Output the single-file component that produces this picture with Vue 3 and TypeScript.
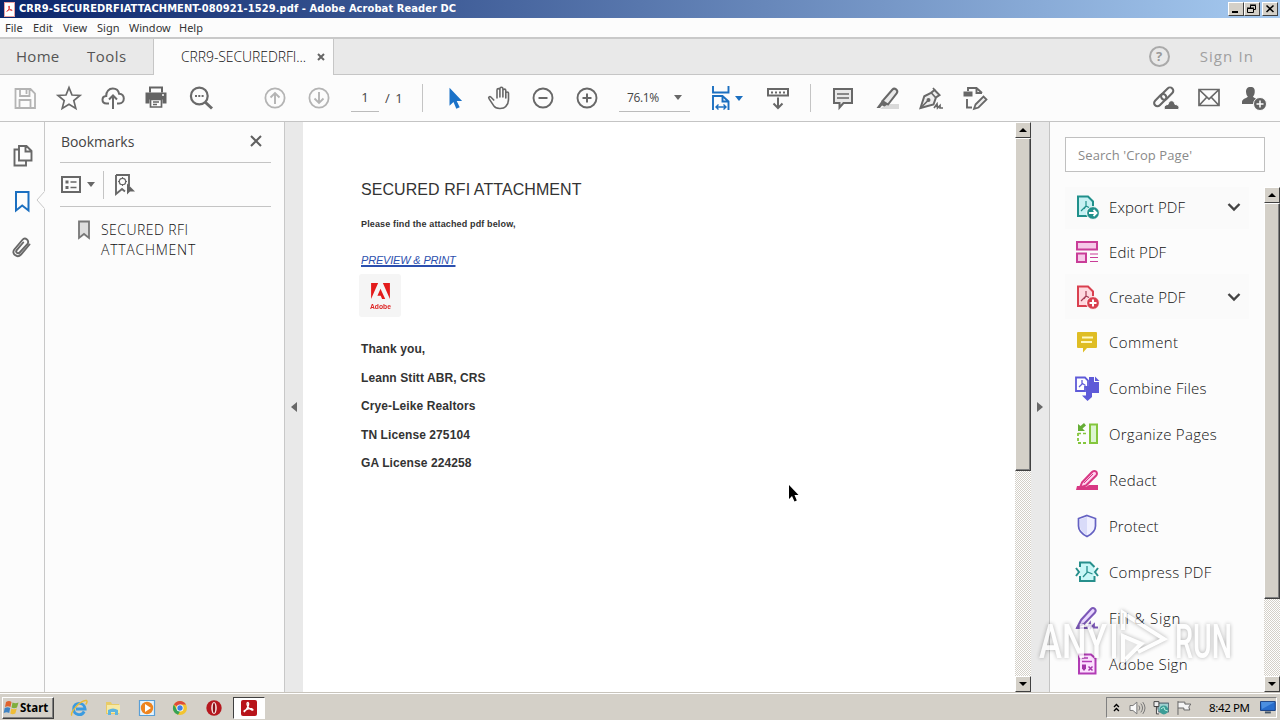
<script setup lang="ts">
interface Tool { label: string; icon: string; chevron?: boolean; tall?: boolean }

const menus = ['File', 'Edit', 'View', 'Sign', 'Window', 'Help']
const tools: Tool[] = [
  { label: 'Export PDF', icon: 'export', chevron: true },
  { label: 'Edit PDF', icon: 'editpdf' },
  { label: 'Create PDF', icon: 'create', chevron: true },
  { label: 'Comment', icon: 'note', tall: true },
  { label: 'Combine Files', icon: 'combine', tall: true },
  { label: 'Organize Pages', icon: 'organize', tall: true },
  { label: 'Redact', icon: 'redact', tall: true },
  { label: 'Protect', icon: 'protect', tall: true },
  { label: 'Compress PDF', icon: 'compress', tall: true },
  { label: 'Fill & Sign', icon: 'fill', tall: true },
  { label: 'Adobe Sign', icon: 'adobesign', tall: true },
]
const signature = ['Thank you,', 'Leann Stitt ABR, CRS', 'Crye-Leike Realtors', 'TN License 275104', 'GA License 224258']
const fileIcons = ['save', 'star', 'cloud', 'print', 'find']
const viewIcons = ['select', 'hand', 'minus', 'plus']
const markIcons = ['comment', 'marker', 'pen', 'stamp']
const shareIcons = ['link', 'mail', 'person']
const quick = ['ie', 'folder', 'media', 'chrome', 'opera']
</script>

<template>
  <div class="screen">
    <svg class="defs" width="0" height="0">
      <symbol id="save" viewBox="0 0 28 28"><path d="M4.500 5h15l4.500 4.500V24H4.500zM9 5v7h9.500V5M8.500 24v-8h11v8M15.500 6v4" fill="none" stroke="#b4b4b4" stroke-width="1.800"/></symbol>
      <symbol id="star" viewBox="0 0 28 28"><path d="M14 3.600l3 7.400 8 .5-6.200 5.100 2 7.800L14 20.200l-6.800 4.200 2-7.800L3 11.500l8-.5z" fill="none" stroke="#6a6a6a" stroke-width="1.700"/></symbol>
      <symbol id="cloud" viewBox="0 0 28 28"><path d="M10 19.500H7.500C5 19.500 3.500 18 3.500 15.800c0-2.300 1.700-3.700 3.700-3.800C7 7.500 10 4.500 13.800 4.500c3.200 0 5.700 2 6.300 5.200 2.900.2 4.700 2.300 4.700 4.800 0 3-2 5-4.700 5H18M14 25V12M10 15.500l4-4 4 4" fill="none" stroke="#6a6a6a" stroke-width="2"/></symbol>
      <symbol id="print" viewBox="0 0 28 28"><g transform="translate(-1 -.5)"><path d="M8 9V4h12v5" fill="none" stroke="#646464" stroke-width="2"/><path d="M3.500 9h21v11h-4v-4h-13v4h-4z" fill="#646464"/><path d="M8.500 16h11v7.500h-11zM11 18.500h6M11 21h4" fill="none" stroke="#646464" stroke-width="1.700"/><path d="M20 11.500h2" stroke="#fff" stroke-width="1.500"/></g></symbol>
      <symbol id="find" viewBox="0 0 28 28"><circle cx="12.300" cy="12" r="8.400" fill="none" stroke="#6a6a6a" stroke-width="2.200"/><path d="M18 18l7 6.500" stroke="#6a6a6a" stroke-width="3"/><path d="M8 12h2m1.300 0h2m1.300 0h2" stroke="#6a6a6a" stroke-width="2"/></symbol>
      <symbol id="up" viewBox="0 0 28 28"><circle cx="14" cy="14" r="9.600" fill="none" stroke="#b4b4b4" stroke-width="1.800"/><path d="M14 20V9M9.500 13.500L14 9l4.500 4.500" fill="none" stroke="#b4b4b4" stroke-width="1.900"/></symbol>
      <symbol id="down" viewBox="0 0 28 28"><circle cx="14" cy="14" r="9.600" fill="none" stroke="#b4b4b4" stroke-width="1.800"/><path d="M14 8v11M9.500 14.500L14 19l4.500-4.500" fill="none" stroke="#b4b4b4" stroke-width="1.900"/></symbol>
      <symbol id="select" viewBox="0 0 28 28"><path d="M8.500 3.700v18l4-3.700 2.800 6.800 3.400-1.500-3-6.300h5.400z" fill="#1b72c8"/></symbol>
      <symbol id="hand" viewBox="0 0 28 28"><path d="M9.200 16.500L5.800 13c-1-.8-2.800.2-1.800 1.600l4.800 7.300c2 3.300 9.700 3.300 12 .5 2-2.200 2.700-4.400 2.700-7V9.200c0-1.700-2.500-1.700-2.700 0V14 6.500c0-1.900-2.900-1.900-2.900 0V13 4.800c0-2-3-2-3 0V13 6c0-1.900-2.900-1.900-2.900 0v8.500" fill="none" stroke="#686868" stroke-width="1.600" stroke-linejoin="round"/></symbol>
      <symbol id="minus" viewBox="0 0 28 28"><circle cx="14" cy="14" r="9.500" fill="none" stroke="#686868" stroke-width="1.900"/><path d="M9.500 14h9" stroke="#686868" stroke-width="2"/></symbol>
      <symbol id="plus" viewBox="0 0 28 28"><circle cx="14" cy="14" r="9.500" fill="none" stroke="#686868" stroke-width="1.900"/><path d="M9.500 14h9M14 9.500v9" stroke="#686868" stroke-width="2"/></symbol>
      <symbol id="fit" viewBox="0 0 28 28"><path d="M6 2v6.500h15.500V2M6 26V12h9.500l6 5.500V26M15.500 12v5.500h6" fill="none" stroke="#1b6fc0" stroke-width="1.900"/><path d="M9 23h10M11.500 20.500L9 23l2.500 2.500M16.500 20.500L19 23l-2.500 2.500" fill="none" stroke="#1b6fc0" stroke-width="1.400"/></symbol>
      <symbol id="toolbar" viewBox="0 0 28 28"><path d="M4 5h20v6.500H4z" fill="none" stroke="#686868" stroke-width="2"/><path d="M7 8.500h2m2 0h2m2 0h2m2 0h2" stroke="#686868" stroke-width="1.800"/><path d="M14 13.500v10M9.500 19.500L14 24l4.500-4.500" fill="none" stroke="#686868" stroke-width="2"/></symbol>
      <symbol id="comment" viewBox="0 0 28 28"><path d="M5 5h18v14h-8.500L10.500 23.500V19H5z" fill="#e9e9e9" stroke="#686868" stroke-width="2"/><path d="M8 10h12M8 14h12" stroke="#686868" stroke-width="1.500"/></symbol>
      <symbol id="marker" viewBox="0 0 28 28"><path d="M13 20h13v5H7z" fill="#d9d9d9"/><path d="M19.500 5.500c2-2.300 6.200.8 4.300 3.700L15 20.500 9.500 17z" fill="#e9e9e9" stroke="#686868" stroke-width="2"/><path d="M9 16.500l5.500 4-3 2L9 21.500 7 24H3.500z" fill="#686868"/></symbol>
      <symbol id="pen" viewBox="0 0 28 28"><path d="M17.500 6l5 5L19 13.500l-2.500 7L3.500 24l3.800-11.700 6.700-3.500z" fill="#eee" stroke="#686868" stroke-width="2"/><path d="M3.500 24l7.500-7.500M16 4l2 2.500M14 8.500l4.500 5" stroke="#686868" stroke-width="1.700"/><circle cx="11.500" cy="16" r="2" fill="#686868"/><path d="M17 24l3-4 .5 4 2.500-2.500v2.500h3" fill="none" stroke="#686868" stroke-width="1.700"/></symbol>
      <symbol id="stamp" viewBox="0 0 28 28"><path d="M7 7V4h8.500l5.500 5M6 15v8.500h5M15.500 4v5H21" fill="none" stroke="#686868" stroke-width="1.900"/><path d="M2.500 7.500h9v5h-9z" fill="#686868"/><path d="M14.500 20.500l8-8 3 3-8 8-4.500 1.300z" fill="#eee" stroke="#686868" stroke-width="1.800"/></symbol>
      <symbol id="link" viewBox="0 0 28 28"><g fill="none" stroke="#686868" stroke-width="2.100"><rect x="9" y="6" width="14.500" height="6.600" rx="3.300" transform="rotate(-45 16.500 9.500)"/><rect x="2.200" y="13" width="14.500" height="6.600" rx="3.300" transform="rotate(-45 9.200 16.500)"/></g><path d="M14 25.500c-2-2 0-5 3-5 1-5 6-5 7 0 4 0 5 4 3 5z" fill="#646464" stroke="#fcfcfc"/></symbol>
      <symbol id="mail" viewBox="0 0 28 28"><path d="M4 5.500h20v16H4zM4.500 6l9.500 9 9.500-9M4.500 21l7.500-8M23.500 21L16 13" fill="none" stroke="#686868" stroke-width="1.700"/></symbol>
      <symbol id="person" viewBox="0 0 28 28"><path d="M11.500 3c3.500 0 4.700 2 4.200 5.500-.2 2-.8 3-1.700 4 0 1.500 5.500 2 5.500 5.500v2H3v-2c0-3.500 5.800-4 5.800-5.500-1-1-1.500-2-1.700-4C6.700 5 8.300 3 11.500 3z" fill="#646464"/><circle cx="21" cy="20" r="6.500" fill="#646464" stroke="#fcfcfc"/><path d="M17.500 20h7M21 16.500v7" stroke="#fff" stroke-width="1.500"/></symbol>
      <symbol id="pages" viewBox="0 0 28 28"><path d="M11 5h7.500l5 5v9.500H11zM17.500 5v5.500h6M11 8.500H6.500v16h11.500V20" fill="none" stroke="#686868" stroke-width="1.900"/></symbol>
      <symbol id="mark" viewBox="0 0 28 28"><path d="M8 5h12.500v18.500L14.200 18.500 8 23.500z" fill="none" stroke="#1b6fc0" stroke-width="2"/></symbol>
      <symbol id="clip" viewBox="0 0 28 28"><path d="M21.500 11.500L13 21.500c-3.700 4-10-.7-6.700-5l8-9.500c2.800-3.300 8 .6 5 4.200l-7.600 8.300c-1.900 2-4.600-.3-3-2.400l6.500-7.600" fill="none" stroke="#686868" stroke-width="1.900" stroke-linecap="round"/></symbol>

      <symbol id="export" viewBox="0 0 28 28"><path d="M5 3.500h10l5 5V23H5z" fill="#c6f1f3" stroke="#20908b" stroke-width="2"/><path d="M8 18l5-5 4 2M13 8v5l-2 3" fill="none" stroke="#20908b" stroke-width="1.200"/><circle cx="20" cy="20" r="6.400" fill="#20908b" stroke="#fff"/><path d="M16 20h7M20.500 17l3 3-3 3" fill="none" stroke="#fff" stroke-width="1.800"/></symbol>
      <symbol id="editpdf" viewBox="0 0 28 28"><path d="M4 4h20v7.500H4zM4 15.500h9v8.500H4z" fill="#f6c9e8" stroke="#c93d98" stroke-width="2"/><path d="M17 16h8M17 19.500h8M17 23.500h8" stroke="#c93d98" stroke-width="1.200"/></symbol>
      <symbol id="create" viewBox="0 0 28 28"><path d="M5 3.500h10l5 5V23H5z" fill="#ffd9df" stroke="#d9404f" stroke-width="2"/><path d="M8 18l5-5 4 2M13 8v5l-2 3" fill="none" stroke="#a33d55" stroke-width="1.200"/><circle cx="20" cy="20" r="6.400" fill="#d9404f" stroke="#fff"/><path d="M16.500 20h7M20 16.500v7" stroke="#fff" stroke-width="2"/></symbol>
      <symbol id="note" viewBox="0 0 28 28"><path d="M5 4h18q1 0 1 1v14q0 1-1 1h-9L10 24.500V20H5q-1 0-1-1V5q0-1 1-1z" fill="#dfbd24"/><path d="M9 9.500h11M8 14h11" stroke="#fff8c0" stroke-width="1.800"/></symbol>
      <symbol id="combine" viewBox="0 0 28 28"><path d="M16 3h5v5h5v11h-7v4l-4.500 4L9 21.500h4v-9L16 12z" fill="#5e5ad8"/><path d="M22 2.500l4.500 4.500H22z" fill="#5e5ad8"/><path d="M3 3.500h9l3 3V13h-3v4H3z" fill="#fff" stroke="#5e5ad8" stroke-width="1.800"/><path d="M6 13l3.500-3.500 3 2M9 6v4" fill="none" stroke="#5e5ad8" stroke-width="1.300"/></symbol>
      <symbol id="organize" viewBox="0 0 28 28"><path d="M17 4.500h7v18.500h-7z" fill="#dcf5d0" stroke="#84c63c" stroke-width="2"/><path d="M5 13v10h9" fill="none" stroke="#84c63c" stroke-width="1.800" stroke-dasharray="3 2"/><path d="M5 13.500h9" stroke="#84c63c" stroke-width="1.600" stroke-dasharray="3 2"/><path d="M5 4v7h7L9.500 8.500 13 5.500 11 3 7.500 6z" fill="#65ad36"/></symbol>
      <symbol id="redact" viewBox="0 0 28 28"><path d="M4 20h6l3 1 3-2h9v5H3z" fill="#d83884"/><path d="M9 16.500L19 6c2.500-3 6.700.7 4.200 3.500L13 19.500l-6 2z" fill="#ffd4f0" stroke="#d83884" stroke-width="2"/><path d="M11 17L20 8" stroke="#d83884"/></symbol>
      <symbol id="protect" viewBox="0 0 28 28"><path d="M14 3.500l8.500 3V14c0 5-3.500 8-8.500 10.500C9 22 5.500 19 5.500 14V6.500z" fill="#f0f0ff" stroke="#6461c2" stroke-width="1.700"/><path d="M14 5v18c-4-2-7-5-7-9V7.500z" fill="#d9dbf9"/></symbol>
      <symbol id="compress" viewBox="0 0 28 28"><path d="M7 9V4.500h10L21.500 9v14H7v-5" fill="#c9f7f7"/><path d="M7 9V4.500h10L21.500 9M7 18v5h14.500v-5" fill="none" stroke="#278f8c" stroke-width="2"/><path d="M3 10l3 4-3 4M25 10l-3 4 3 4" fill="none" stroke="#278f8c" stroke-width="2"/><path d="M10 19l4.500-5 5 2M14 8v6" fill="none" stroke="#278f8c" stroke-width="1.300"/></symbol>
      <symbol id="fill" viewBox="0 0 28 28"><path d="M8 16L18 5c2.500-2.500 6 .8 4 3.500L11 20l-6.500 3z" fill="#ead9ff" stroke="#7c58b8" stroke-width="2"/><path d="M3 24h11l3-5 .5 5 3.500-3.500v3h4" fill="none" stroke="#7c58b8" stroke-width="1.800"/></symbol>
      <symbol id="adobesign" viewBox="0 0 28 28"><path d="M6 4.500h12l4.500 4V23.500H6z" fill="#fce1ff" stroke="#b23cb5" stroke-width="2"/><path d="M9 8h6M9 11.500h10" stroke="#b23cb5" stroke-width="1.300"/><path d="M9 14.500h4v4l-2 2.500-2-2.500z" fill="#a336a8"/><path d="M15.500 16.500l4 4M19.500 16.500l-4 4" stroke="#a336a8" stroke-width="1.500"/></symbol>

      <symbol id="ie" viewBox="0 0 18 18"><path d="M14.200 12.500c-3 5.500-11 3-10.500-3 .2-6.800 10.700-7 11.400.5H6" fill="none" stroke="#3b9be0" stroke-width="2.800"/><path d="M2 16.500c-3-2 8.500-16 14.500-15 1 1 .2 2.800-.8 4" fill="none" stroke="#e9bb35" stroke-width="1.400"/></symbol>
      <symbol id="folder" viewBox="0 0 18 18"><path d="M2 3h5l1 2h7v10H2z" fill="#e8cb67"/><path d="M3 6h13v8H3z" fill="#f6e9a4"/><path d="M4 16v-5q5-3 10 0v5h-3v-3H7v3z" fill="#5eb5df"/></symbol>
      <symbol id="media" viewBox="0 0 18 18"><path d="M1.500 1.500h15v15h-15z" fill="#e3f3ff" stroke="#5a9fd6" stroke-width="1.200"/><circle cx="9" cy="9" r="6.200" fill="#ee841f"/><path d="M7 5l6 4-6 4z" fill="#fff"/></symbol>
      <symbol id="chrome" viewBox="0 0 18 18"><circle cx="9" cy="9" r="7" fill="#f2c431"/><path d="M9 9L2.900 5.500A7 7 0 0 1 15 5.500H9z" fill="#dd4a3c"/><path d="M2.900 5.500L6 11l3 1.500-2 3.300A7 7 0 0 1 2.900 5.500z" fill="#35a257"/><circle cx="9" cy="9" r="3.500" fill="#fff"/><circle cx="9" cy="9" r="2.700" fill="#3e80e4"/></symbol>
      <symbol id="opera" viewBox="0 0 18 18"><circle cx="9" cy="9" r="7.700" fill="#b6181f"/><ellipse cx="9" cy="9" rx="2.800" ry="6" fill="#f7e3e1"/><ellipse cx="9" cy="9" rx="1.200" ry="5" fill="#8a1018"/></symbol>
      <symbol id="acro" viewBox="0 0 18 18"><path d="M4 14c-2-1 5-4.500 9-3.500 4 2-2 3-5-3C6.800 5 7 2.500 8.500 3c2 1-1 8.500-4.500 11z" fill="none" stroke="currentColor" stroke-width="1.600"/></symbol>
    </svg>

    <header class="titlebar">
      <span class="appicon"><svg width="11" height="12"><use href="#acro"/></svg></span>
      <span class="title">CRR9-SECUREDRFIATTACHMENT-080921-1529.pdf - Adobe Acrobat Reader DC</span>
      <span class="winbtns">
        <i class="wb"><svg width="14" height="12" viewBox="0 0 14 12"><path d="M3 9h6" stroke="#000" stroke-width="2"/></svg></i>
        <i class="wb"><svg width="14" height="12" viewBox="0 0 14 12"><path d="M5.500 5V2.500h5v4H8.500M5 2h6M2.500 5.500h6v4h-6zM2 5h7" fill="none" stroke="#000"/></svg></i>
        <i class="wb close"><svg width="14" height="12" viewBox="0 0 14 12"><path d="M3.500 2.500l7 6.500M10.500 2.500l-7 6.500" stroke="#000" stroke-width="1.600"/></svg></i>
      </span>
    </header>
    <nav class="menubar"><span v-for="m in menus" :key="m" :class="'m-' + m.toLowerCase()">{{ m }}</span></nav>

    <div class="tabs">
      <div class="lefttabs"><span class="home">Home</span><span class="toolstab">Tools</span></div>
      <div class="active"><span class="doc">CRR9-SECUREDRFI...</span><svg width="8" height="8" viewBox="0 0 8 8"><path d="M1 1l6 6M7 1L1 7" stroke="#666" stroke-width="2"/></svg></div>
      <div class="righttabs"><span class="help">?</span><span class="signin">Sign In</span></div>
    </div>

    <div class="toolbar">
      <svg v-for="i in fileIcons" :key="i" class="ti"><use :href="'#' + i"/></svg>
      <i class="gap"></i>
      <svg class="ti"><use href="#up"/></svg><svg class="ti"><use href="#down"/></svg>
      <span class="pageno">1</span><span class="pagecount">/ 1</span><i class="vdiv"></i>
      <i class="gap10"></i>
      <svg v-for="i in viewIcons" :key="i" class="ti"><use :href="'#' + i"/></svg>
      <span class="zoom"><span>76.1%</span><i class="caret"></i></span>
      <span class="fitbox"><svg class="ti"><use href="#fit"/></svg><i class="caret blue"></i></span>
      <svg class="ti"><use href="#toolbar"/></svg>
      <i class="vdiv d2"></i>
      <svg v-for="i in markIcons" :key="i" class="ti"><use :href="'#' + i"/></svg>
      <i class="spring"></i>
      <svg v-for="i in shareIcons" :key="i" class="ti"><use :href="'#' + i"/></svg>
    </div>

    <main class="main">
      <aside class="rail">
        <svg class="ti"><use href="#pages"/></svg><svg class="ti"><use href="#mark"/></svg><svg class="ti"><use href="#clip"/></svg>
        <svg class="notch" width="9" height="18" viewBox="0 0 9 18"><path d="M8 0v1L1 9l7 8v1h1V0z" fill="#fcfcfc"/><path d="M8.500 0.500L1 9l7.500 8.500" fill="none" stroke="#c8c8c8"/></svg>
      </aside>
      <section class="bookmarks">
        <div class="bhead"><span>Bookmarks</span><svg width="14" height="14" viewBox="0 0 14 14"><path d="M2 2l10 10M12 2L2 12" stroke="#606060" stroke-width="2"/></svg></div>
        <div class="btools">
          <svg width="20" height="17" viewBox="0 0 20 17"><path d="M1 1h18v15H1z" fill="none" stroke="#686868" stroke-width="2"/><path d="M4.500 4.500h3v3h-3zM4.500 10h3v3h-3z" fill="#686868"/><path d="M9.500 6h6M9.500 11.500h6" stroke="#686868" stroke-width="1.700"/></svg>
          <i class="caret"></i><i class="bdiv"></i>
          <svg width="22" height="24" viewBox="0 0 22 24"><path d="M2 2h13v11M2 2v19l6-5 3 2.500" fill="none" stroke="#686868" stroke-width="1.900"/><circle cx="8.500" cy="8.500" r="3.200" fill="none" stroke="#686868" stroke-width="1.300"/><path d="M8.500 4v2M8.500 11v2M4 8.500h2M11 8.500h2" stroke="#686868"/><path d="M13 10.500l8 8h-5l-3 3z" fill="#646464"/></svg>
        </div>
        <div class="bitem"><svg width="14" height="20" viewBox="0 0 14 20"><path d="M2 1.500h10V18L7 14l-5 4z" fill="#dedede" stroke="#777" stroke-width="1.800"/></svg><span>SECURED RFI<br><em>ATTACHMENT</em></span></div>
      </section>
      <div class="collapse"><i class="tri left"></i></div>
      <article class="page">
        <h1>SECURED RFI ATTACHMENT</h1>
        <p class="sub">Please find the attached pdf below,</p>
        <a class="preview">PREVIEW &amp; PRINT</a>
        <div class="adobe"><svg width="19" height="16" viewBox="0 0 20 17"><path d="M0 0h7.500L0 17zM12.500 0H20v17zM10 6l5 11h-3.300l-1.500-3.500H6.700z" fill="#e31b1b"/></svg><span>Adobe</span></div>
        <div class="sig"><p v-for="s in signature" :key="s">{{ s }}</p></div>
      </article>
      <div class="sb sbmain"><i class="sbtn"><b class="au"></b></i><i class="thumb"></i><i class="sbtn last"><b class="ad"></b></i></div>
      <div class="collapse rightc"><i class="tri right"></i></div>
      <aside class="panel">
        <div class="search">Search 'Crop Page'</div>
        <div class="panelbody">
          <ul>
            <li v-for="t in tools" :key="t.label" :class="{ tall: t.tall, shade: t.chevron }">
              <svg class="ticon"><use :href="'#' + t.icon"/></svg><span :class="'t-' + t.icon">{{ t.label }}</span>
              <svg v-if="t.chevron" class="chev" width="14" height="10" viewBox="0 0 14 10"><path d="M1.500 2L7 7.500 12.500 2" fill="none" stroke="#444" stroke-width="2.400"/></svg>
            </li>
          </ul>
          <div class="sb sbright"><i class="sbtn"><b class="au"></b></i><i class="thumb"></i><i class="sbtn last"><b class="ad"></b></i></div>
        </div>
      </aside>
    </main>

    <footer class="taskbar">
      <div class="start"><svg width="17" height="16" viewBox="0 0 17 16"><path d="M3 2c2-1.500 4-1.500 5.500 0L7.500 7C6 6 4 6 2 7z" fill="#e0642f"/><path d="M9.500 2.500c2 1 4 1 6 0l-1.500 5c-2 1-4 1-5.500 0z" fill="#7fae3c"/><path d="M1.700 8c2-1 4-1 5.500 0l-1 5c-1.500-1-3.500-1-5.500 0z" fill="#3f83c4"/><path d="M8.300 8.500c1.500 1 3.500 1 5.500 0l-1.500 5c-2 1-3.500 1-5 0z" fill="#efbd37"/></svg><span>Start</span></div>
      <svg v-for="q in quick" :key="q" class="quick"><use :href="'#' + q"/></svg>
      <div class="running"><span><svg width="15" height="15"><use href="#acro"/></svg></span></div>
      <div class="tray">
        <svg class="up2" width="7" height="9" viewBox="0 0 7 9"><path d="M1 4l2.500-2.500L6 4M1 8l2.500-2.500L6 8" fill="none" stroke="#000" stroke-width="1.400"/></svg>
        <svg class="spk" width="17" height="16" viewBox="0 0 17 16"><path d="M1 5.500h3L8 2v12L4 10.500H1z" fill="#fafafa" stroke="#777"/><path d="M10 5.500q2 2.500 0 5M12 3.500q3.500 4.500 0 9M14 2q4.500 6 0 12" fill="none" stroke="#777"/></svg>
        <svg class="net" width="17" height="16" viewBox="0 0 17 16"><path d="M5 3h11v9H5z" fill="#9ed1d0" stroke="#456"/><path d="M1 1.500h5v5H1zM3.500 6v8H6" fill="#eee" stroke="#444"/><circle cx="11" cy="10" r="4.500" fill="#3b9d96"/><path d="M8 9l3-2 1 3 3 1" stroke="#b9efe0" fill="none"/></svg>
        <svg class="flag" width="17" height="16" viewBox="0 0 17 16"><path d="M2 1v14M2 2h7v2h6l-2 3 1 3H8V8H2" fill="#f5f5f5" stroke="#666"/></svg>
        <span>8:42 PM</span>
        <svg class="desk" width="16" height="13" viewBox="0 0 16 13"><path d="M.5.5h15v9H.5z" fill="#286dcc" stroke="#183f82"/><path d="M1 1h14L2 8z" fill="#4c8fe0"/><path d="M5 11.500h6" stroke="#456" stroke-width="2"/></svg>
      </div>
    </footer>

    <svg class="cursor" width="12" height="18" viewBox="0 0 12 18"><path d="M1 0v14l3-3 2.500 5.500 2.300-1L6.500 10h4z" fill="#000"/></svg>
    <svg class="watermark" width="206" height="66" viewBox="0 0 206 66">
      <g class="wm"><text x="5" y="52" textLength="68" lengthAdjust="spacingAndGlyphs">ANY</text><text x="141" y="52" textLength="57" lengthAdjust="spacingAndGlyphs">RUN</text>
        <path d="M80 18v34M89 24V7l41 26-26 13M89 56V30l18 8z" fill="none" stroke="#fff" stroke-width="4"/><path d="M88 28l24 9-24 17z" fill="#fff" fill-opacity=".6"/></g>
    </svg>
  </div>
</template>

<style>
html, body { margin: 0; overflow: hidden; }
</style>
<style scoped>
.screen { position: relative; width: 1280px; height: 720px; overflow: hidden; background: #fcfcfc; font-family: "Open Sans", "Noto Sans", sans-serif; color: #444; display: flex; flex-direction: column; }
.screen * { box-sizing: border-box; }
.defs { position: absolute; }
i, em { font-style: normal; }
span { white-space: nowrap; }
.titlebar { height: 18px; flex: none; display: flex; align-items: center; padding-left: 4px; background: linear-gradient(90deg, #0a246a, #a6caf0); }
.appicon { width: 11px; height: 15px; background: #fff; color: #d22; display: flex; align-items: center; border: 1px solid #e8a0a0; overflow: hidden; }
.title { margin-left: 4px; color: #fff; font: bold 11px/18px "DejaVu Sans Condensed", "Noto Sans", sans-serif; letter-spacing: .09px; }
.winbtns { margin-left: auto; display: flex; padding-right: 2px; }
.wb { width: 16px; height: 14px; background: #d4d0c8; border: 1px solid; border-color: #fff #404040 #404040 #fff; display: block; overflow: hidden; }
.wb svg { display: block; }
.close { margin-left: 2px; }
.menubar { height: 21px; flex: none; display: flex; padding-left: 5px; border-bottom: 2px solid #c9c9c9; font: 11px/20px "Noto Sans", sans-serif; color: #333; }
.m-file { width: 28px; } .m-edit { width: 30px; } .m-view { width: 34px; } .m-sign { width: 32px; } .m-window { width: 50px; }
.tabs { height: 36px; flex: none; display: flex; font-size: 15px; font-weight: 300; line-height: 35px; }
.lefttabs { width: 154px; background: #e9e9e9; border-bottom: 1px solid #c6c6c6; border-right: 1px solid #c6c6c6; padding-left: 16px; display: flex; }
.home { width: 71px; letter-spacing: .3px; } .toolstab { letter-spacing: .45px; }
.home, .toolstab { font-weight: 400; color: #555; }
.active { width: 179px; display: flex; align-items: center; padding: 0 0 1px 27px; color: #111; }
.doc { width: 136px; font-size: 14px; letter-spacing: -.1px; }
.righttabs { flex: 1; background: #e9e9e9; border: 1px solid #c6c6c6; border-width: 0 0 1px 1px; display: flex; justify-content: flex-end; align-items: center; padding-right: 26px; color: #999; }
.help { width: 21px; height: 21px; border: 2px solid #aaa; border-radius: 50%; font: bold 13px/17px "Open Sans", sans-serif; text-align: center; margin-right: 30px; }
.signin { letter-spacing: 1.1px; font-weight: 400; color: #a0a0a0; }
.toolbar { height: 47px; flex: none; display: flex; align-items: center; border-bottom: 1px solid #c4c4c4; padding: 0 5px 0 3px; }
.ti { width: 28px; height: 28px; margin: 0 8px; flex: none; }
.gap { width: 30px; flex: none; }
.pageno { width: 28px; margin-left: 10px; height: 28px; border-bottom: 1px solid #bbb; text-align: center; font-size: 13px; line-height: 27px; }
.pagecount { width: 37px; padding-left: 6px; margin-right: 6px; font-size: 13px; line-height: 27px; letter-spacing: 1px; }
.vdiv { width: 1px; height: 28px; background: #c4c4c4; flex: none; }
.gap10 { width: 10px; flex: none; }
.zoom { width: 71px; height: 28px; margin-left: 10px; border-bottom: 1px solid #bbb; display: flex; align-items: center; padding-left: 8px; font-size: 12px; letter-spacing: -.4px; flex: none; }
.zoom span { width: 47px; }
.caret { width: 0; height: 0; border: 4px solid transparent; border-top: 5px solid #686868; border-bottom: 0; flex: none; }
.blue { border-top-color: #1b6fc0; margin-left: -8px; }
.fitbox { width: 57px; margin-left: 9px; display: flex; align-items: center; flex: none; }
.d2 { margin: 0 10px; }
.spring { flex: 1; }
.main { height: 570px; flex: none; display: flex; }
.rail { position: relative; width: 45px; border-right: 1px solid #c8c8c8; display: flex; flex-direction: column; gap: 18px; padding-top: 19px; flex: none; }
.rail .ti { margin-left: 8px; }
.notch { position: absolute; right: -1px; top: 69px; }
.bookmarks { width: 240px; border-right: 1px solid #c8c8c8; padding: 0 13px 0 15px; flex: none; }
.bhead { height: 41px; border-bottom: 1px solid #c4c4c4; display: flex; justify-content: space-between; align-items: center; padding: 0 8px 2px 1px; font-size: 14px; letter-spacing: -.05px; }
.btools { height: 44px; border-bottom: 1px solid #c4c4c4; display: flex; align-items: center; padding-left: 1px; }
.btools .caret { margin-left: 6px; }
.bdiv { width: 1px; height: 28px; background: #c4c4c4; margin: 0 10px 0 8px; }
.bitem { display: flex; padding: 13px 0 0 17px; font-size: 14px; font-weight: 300; line-height: 20px; letter-spacing: .45px; }
.bitem span { margin-left: 10px; color: #111; }
.bitem em { letter-spacing: .75px; }
.collapse { width: 18px; background: #e9e9e9; display: flex; align-items: center; justify-content: center; flex: none; }
.rightc { border-right: 1px solid #c4c4c4; width: 19px; }
.tri { border: 5px solid transparent; }
.left { border-right: 6px solid #686868; border-left: 0; }
.right { border-left: 6px solid #686868; border-right: 0; }
.page { flex: 1; background: #fff; padding: 57px 0 0 58px; font-family: "Liberation Sans", Arial, sans-serif; color: #333; }
.page h1 { margin: 0; font-size: 16px; line-height: 22px; font-weight: 400; letter-spacing: .07px; }
.sub { margin: 15px 0 0; font-size: 9px; font-weight: bold; line-height: 16px; letter-spacing: .14px; }
.preview { display: block; margin-top: 20px; font-size: 11px; line-height: 16px; font-style: italic; color: #2b4fae; text-decoration: underline; text-decoration-thickness: 2px; letter-spacing: -.18px; }
.adobe { margin: 6px 0 0 -2px; width: 42px; height: 43px; border-radius: 3px; background: #f5f5f5; display: flex; flex-direction: column; align-items: center; padding-top: 9px; }
.adobe svg { flex: none; }
.adobe span { margin-top: 3px; font: bold 8px/9px "Liberation Sans", sans-serif; color: #d22; transform: scaleX(.84); }
.sig { margin-top: 18px; }
.sig p { margin: 0; height: 28.5px; line-height: 29px; font-size: 12px; font-weight: bold; letter-spacing: .09px; }
.sb { width: 16px; flex: none; display: flex; flex-direction: column; background: repeating-conic-gradient(#d4d0c8 0 25%, #fff 0 50%) 0 0 / 2px 2px; }
.sbtn { height: 16px; flex: none; background: #d4d0c8; border: 1px solid; border-color: #fff #404040 #404040 #fff; display: flex; align-items: center; justify-content: center; }
.au { border: 4px solid transparent; border-top: 0; border-bottom: 4px solid #000; }
.ad { border: 4px solid transparent; border-bottom: 0; border-top: 4px solid #000; }
.thumb { height: 333px; background: #d4d0c8; border: 1px solid; border-color: #fff #404040 #404040 #fff; box-shadow: inset -1px -1px #808080; }
.last { margin-top: auto; }
.sbright .thumb { height: 396px; }
.panel { width: 230px; flex: none; padding-top: 15px; }
.search { margin-left: 15px; width: 200px; height: 35px; border: 1px solid #c0c0c0; background: #fff; padding-left: 12px; font-size: 13px; line-height: 34px; color: #8a8a8a; white-space: nowrap; letter-spacing: .1px; }
.panelbody { margin-top: 15px; height: 505px; display: flex; overflow: hidden; }
ul { margin: -3px 0 0 15px; padding: 0; list-style: none; width: 199px; height: 508px; overflow: hidden; }
li { width: 184px; height: 45px; display: flex; align-items: center; padding-left: 8px; font-size: 15px; font-weight: 300; }
.tall { height: 46px; }
.shade { background: #fafafa; }
.ticon { width: 28px; height: 28px; flex: none; margin-right: 8px; }
li span { color: #111; letter-spacing: .28px; }
.t-export, .t-create, .t-editpdf, .t-protect { letter-spacing: .1px; }
.t-note { letter-spacing: .4px; }
li .t-fill { letter-spacing: .7px; }
.chev { margin-left: auto; margin-right: 8px; }
.taskbar { height: 28px; flex: none; background: #d4d0c8; border-top: 1px solid #c8c4bc; box-shadow: inset 0 1px #fff; display: flex; align-items: center; padding: 2px 3px 0 2px; }
.start { width: 52px; height: 22px; border: 1px solid; border-color: #fff #404040 #404040 #fff; box-shadow: inset -1px -1px #808080; display: flex; align-items: center; font: bold 11.5px/20px "Noto Sans", sans-serif; color: #000; margin-right: 16px; }
.quick { width: 18px; height: 18px; margin-right: 15.8px; flex: none; }
.running { width: 32px; height: 22px; background: #fff; border: 1px solid; border-color: #404040 #fff #fff #404040; display: flex; align-items: center; justify-content: center; margin-left: -6px; }
.running span { width: 16px; height: 16px; background: #b8141a; color: #fff; border-radius: 2px; display: flex; }
.tray { margin-left: auto; width: 171px; height: 21px; border: 1px solid; border-color: #808080 #fff #fff #808080; display: flex; align-items: center; padding-left: 6px; font: 12px/20px "Noto Sans", sans-serif; color: #000; }
.spk { margin-left: 9px; } .net { margin-left: 7px; } .flag { margin-left: 7px; margin-right: 16px; } .tray span { font-size: 11.5px; width: 52px; letter-spacing: -.4px; }
.cursor { position: absolute; left: 788px; top: 485px; }
.watermark { position: absolute; left: 1034px; top: 606px; opacity: .75; }
.wm { filter: drop-shadow(0 0 2px rgba(0, 0, 0, .4)); }
.wm text { font: 500 48px Roboto, sans-serif; fill: #fff; }
</style>
